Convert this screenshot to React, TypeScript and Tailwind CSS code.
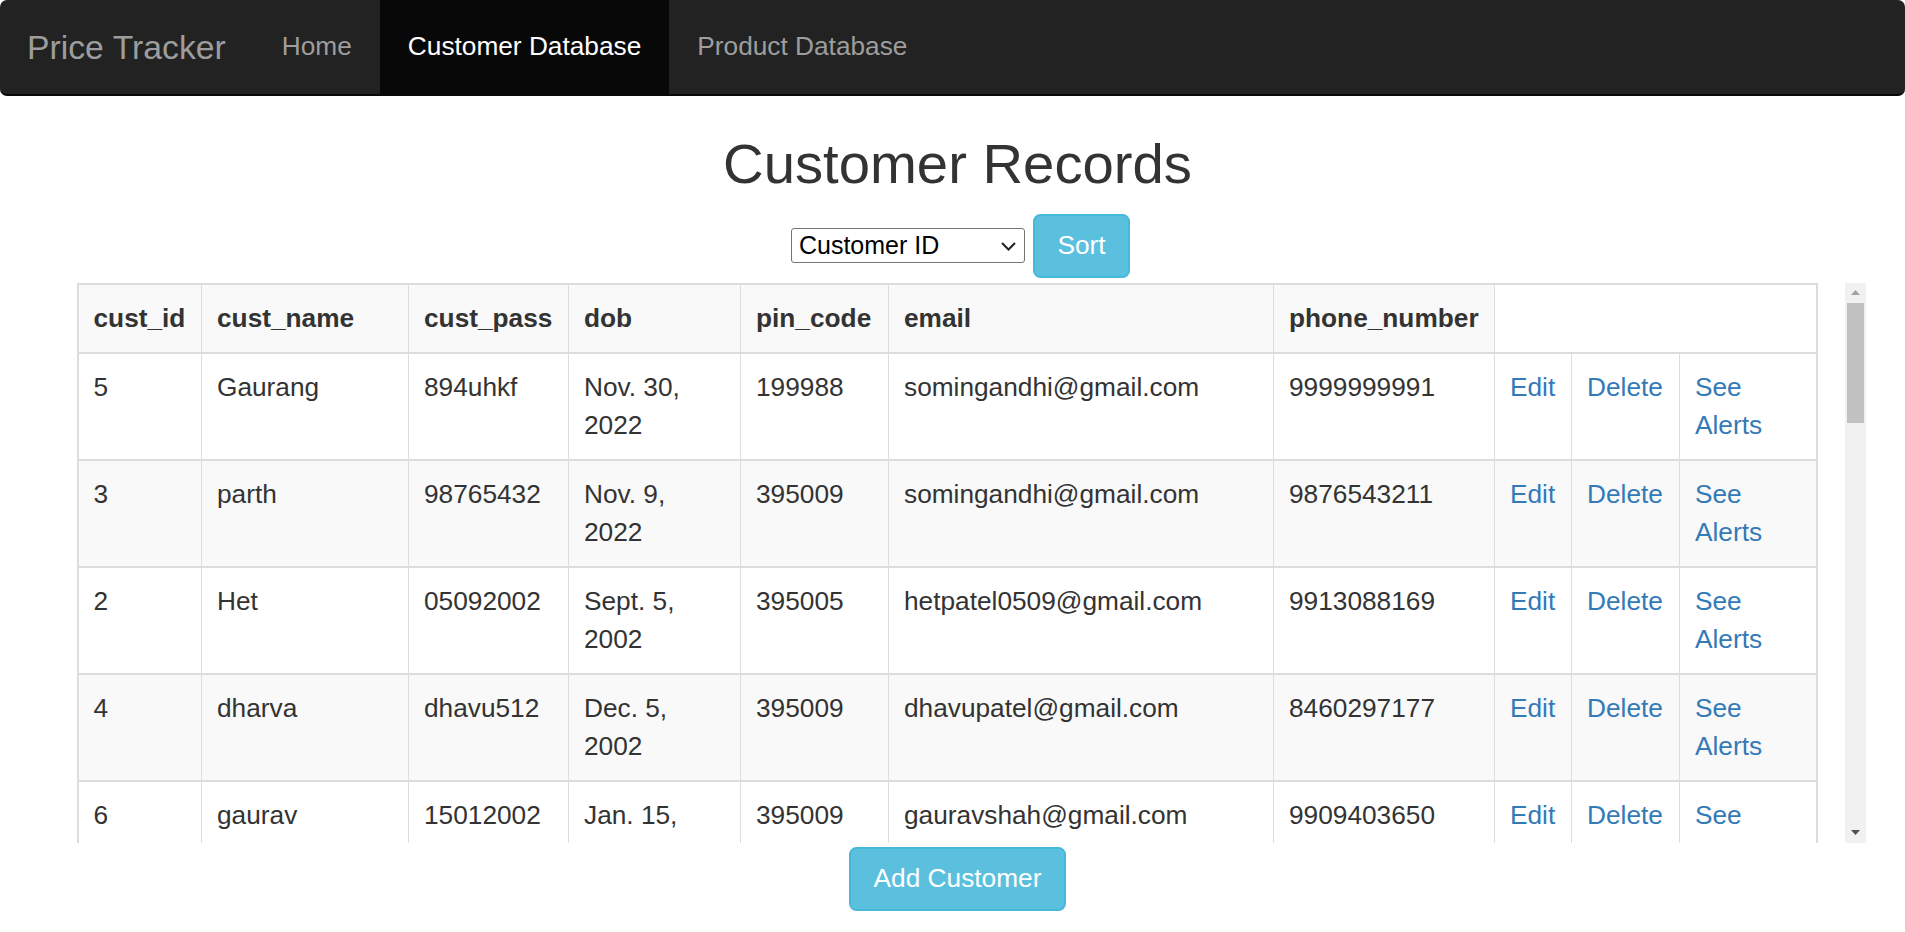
import { useState } from 'react';

type Customer = {
  id: number;
  name: string;
  pass: string;
  dob: string;
  pin: string;
  email: string;
  phone: string;
};

// records as listed on the page
const customers: Customer[] = [
  { id: 5, name: 'Gaurang', pass: '894uhkf', dob: 'Nov. 30, 2022', pin: '199988', email: 'somingandhi@gmail.com', phone: '9999999991' },
  { id: 3, name: 'parth', pass: '98765432', dob: 'Nov. 9, 2022', pin: '395009', email: 'somingandhi@gmail.com', phone: '9876543211' },
  { id: 2, name: 'Het', pass: '05092002', dob: 'Sept. 5, 2002', pin: '395005', email: 'hetpatel0509@gmail.com', phone: '9913088169' },
  { id: 4, name: 'dharva', pass: 'dhavu512', dob: 'Dec. 5, 2002', pin: '395009', email: 'dhavupatel@gmail.com', phone: '8460297177' },
  { id: 6, name: 'gaurav', pass: '15012002', dob: 'Jan. 15, 2002', pin: '395009', email: 'gauravshah@gmail.com', phone: '9909403650' },
  { id: 7, name: 'meet', pass: 'meet2002', dob: 'Feb. 11, 2002', pin: '395007', email: 'meetshah@gmail.com', phone: '9824012345' },
  { id: 8, name: 'karan', pass: 'karan123', dob: 'Mar. 3, 2001', pin: '395001', email: 'karanmehta@gmail.com', phone: '9825098765' },
  { id: 9, name: 'riya', pass: 'riya0412', dob: 'April 12, 2002', pin: '395004', email: 'riyadesai@gmail.com', phone: '9426012398' },
];

const headers = ['cust_id', 'cust_name', 'cust_pass', 'dob', 'pin_code', 'email', 'phone_number'];
const colWidths = [124, 207, 160, 172, 148, 385, 221, 77, 108, 137];

const cell = 'px-[15px] py-[15px] align-top text-left border-x border-y-2 border-[#ddd]';

export default function App() {
  const [sortBy, setSortBy] = useState('cust_id');

  return (
    <div className="min-h-screen bg-white font-['Liberation_Sans',Arial,sans-serif] text-[#333] text-[26.25px] leading-[37.5px]">
      {/* navbar */}
      <nav className="flex h-[96px] bg-[#222] border-b-2 border-[#080808] rounded-[7px]">
        <a href="#" className="block pl-[27px] pr-[28px] pt-[28.5px] text-[33.75px] leading-[37.5px] text-[#9d9d9d]">
          Price Tracker
        </a>
        <ul className="flex">
          <li>
            <a href="#" className="block h-[94px] px-[28px] pt-[28px] text-[#9d9d9d]">Home</a>
          </li>
          <li>
            <a href="#" className="block h-[94px] px-[28px] pt-[28px] bg-[#080808] text-white">Customer Database</a>
          </li>
          <li>
            <a href="#" className="block h-[94px] px-[28px] pt-[28px] text-[#9d9d9d]">Product Database</a>
          </li>
        </ul>
      </nav>

      <div className="pl-[49px] pr-[39px]">
        <h2 className="mt-[37px] text-center text-[56.25px] leading-[62px] font-normal">Customer Records</h2>

        {/* sort controls */}
        <div className="mt-[19px] pl-[6px] flex items-center justify-center gap-[8px]">
          <div className="relative">
            <select
              value={sortBy}
              onChange={e => setSortBy(e.target.value)}
              className="appearance-none block w-[234px] h-[35px] pl-[7px] border border-[#767676] rounded-[3px] bg-white text-[25px] leading-[33px] text-black"
            >
              <option value="cust_id">Customer ID</option>
              <option value="cust_name">Customer Name</option>
              <option value="dob">Date of Birth</option>
              <option value="pin_code">Pin Code</option>
            </select>
            <svg className="absolute left-[210px] top-[14px] pointer-events-none" width="15" height="9" viewBox="0 0 15 9">
              <polyline points="1,1 7.5,7.5 14,1" fill="none" stroke="#222" strokeWidth="2" />
            </svg>
          </div>
          <button className="h-[63.75px] px-[22.5px] bg-[#5bc0de] border-2 border-[#46b8da] rounded-[7.5px] text-white">
            Sort
          </button>
        </div>

        {/* records table with its scrollbar */}
        <div className="mt-[5px] flex h-[560px]">
          <div className="flex-1 overflow-hidden">
            <table className="mx-auto w-[1740px] table-fixed border-collapse border-2 border-[#ddd]">
              <colgroup>
                {colWidths.map((w, i) => (
                  <col key={i} style={{ width: w }} />
                ))}
              </colgroup>
              <tbody>
                <tr className="bg-[#f9f9f9]">
                  {headers.map(h => (
                    <th key={h} className={`${cell} font-bold whitespace-nowrap`}>{h}</th>
                  ))}
                </tr>
                {customers.map((c, i) => (
                  <tr key={c.id} className={i % 2 === 1 ? 'bg-[#f9f9f9]' : 'bg-white'}>
                    <td className={cell}>{c.id}</td>
                    <td className={`${cell} whitespace-nowrap`}>{c.name}</td>
                    <td className={`${cell} whitespace-nowrap`}>{c.pass}</td>
                    <td className={cell}>{c.dob}</td>
                    <td className={`${cell} whitespace-nowrap`}>{c.pin}</td>
                    <td className={`${cell} whitespace-nowrap`}>{c.email}</td>
                    <td className={`${cell} whitespace-nowrap`}>{c.phone}</td>
                    <td className={`${cell} whitespace-nowrap`}>
                      <a href="#" className="text-[#337ab7]">Edit</a>
                    </td>
                    <td className={`${cell} whitespace-nowrap`}>
                      <a href="#" className="text-[#337ab7]">Delete</a>
                    </td>
                    <td className={cell}>
                      <a href="#" className="text-[#337ab7]">See Alerts</a>
                    </td>
                  </tr>
                ))}
              </tbody>
            </table>
          </div>
          <div className="w-[21px] flex flex-col items-center bg-[#f1f1f1]">
            <div className="h-[20px] w-full flex items-center justify-center">
              <svg width="9" height="5" viewBox="0 0 9 5">
                <polygon points="4.5,0 9,5 0,5" fill="#a3a3a3" />
              </svg>
            </div>
            <div className="h-[120px] w-[17px] bg-[#c1c1c1]" />
            <div className="flex-1" />
            <div className="h-[20px] w-full flex items-center justify-center">
              <svg width="9" height="5" viewBox="0 0 9 5">
                <polygon points="0,0 9,0 4.5,5" fill="#505050" />
              </svg>
            </div>
          </div>
        </div>

        <div className="mt-[4px] flex justify-center">
          <button className="h-[63.75px] px-[22.5px] bg-[#5bc0de] border-2 border-[#46b8da] rounded-[7.5px] text-white">
            Add Customer
          </button>
        </div>
      </div>
    </div>
  );
}
